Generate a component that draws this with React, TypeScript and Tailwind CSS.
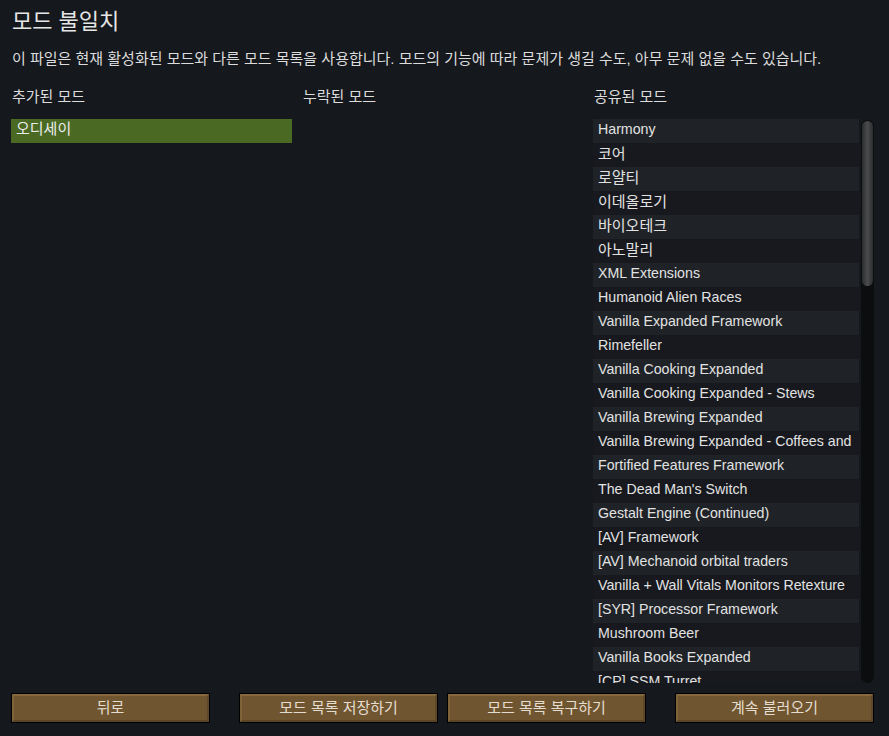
const FONT = { fontFamily: '"Liberation Sans", "Noto Sans CJK KR", sans-serif' }

const added = ["오디세이"]

// the game cuts long names at the row edge
const shared = [
  "Harmony",
  "코어",
  "로얄티",
  "이데올로기",
  "바이오테크",
  "아노말리",
  "XML Extensions",
  "Humanoid Alien Races",
  "Vanilla Expanded Framework",
  "Rimefeller",
  "Vanilla Cooking Expanded",
  "Vanilla Cooking Expanded - Stews",
  "Vanilla Brewing Expanded",
  "Vanilla Brewing Expanded - Coffees and",
  "Fortified Features Framework",
  "The Dead Man's Switch",
  "Gestalt Engine (Continued)",
  "[AV] Framework",
  "[AV] Mechanoid orbital traders",
  "Vanilla + Wall Vitals Monitors Retexture",
  "[SYR] Processor Framework",
  "Mushroom Beer",
  "Vanilla Books Expanded",
  "[CP] SSM Turret",
]

const HANGUL = /[가-힣]/

function Button({ label }: { label: string }) {
  return (
    <button className="h-[30px] w-[199px] border border-black bg-[#705630] p-0">
      <div className="flex h-full w-full items-center justify-center border-2 border-t-[#85693d] border-l-[#7f643a] border-b-[#5a4526] border-r-[#5e4828] text-[15px] text-[#e4ddd0]">
        {label}
      </div>
    </button>
  )
}

export default function App() {
  return (
    <div style={FONT} className="flex h-[736px] w-[889px] flex-col overflow-hidden bg-[#15181d] px-[11px] text-[#dcdcdc]">
      <h1 className="mt-[7px] h-[30px] pl-px text-[22px] leading-[30px] text-[#e6e6e6]">모드 불일치</h1>
      <p className="mt-[12px] h-[20px] pl-px text-[15px] leading-[20px]">
        이 파일은 현재 활성화된 모드와 다른 모드 목록을 사용합니다. 모드의 기능에 따라 문제가 생길 수도, 아무 문제 없을 수도 있습니다.
      </p>

      <div className="mt-[19px] grid h-[596px] grid-cols-[281px_281px_281px] gap-x-[10px]">
        <div className="flex flex-col">
          <div className="h-[31px] pl-px text-[15px] leading-[18px]">추가된 모드</div>
          {added.map((m) => (
            <div key={m} className="h-[24px] bg-[#4a6a24] pl-[5px] text-[15px] leading-[20px] text-[#ececec]">
              {m}
            </div>
          ))}
        </div>
        <div className="flex flex-col">
          <div className="h-[31px] pl-px text-[15px] leading-[18px]">누락된 모드</div>
        </div>
        <div className="flex flex-col">
          <div className="h-[31px] pl-px text-[15px] leading-[18px]">공유된 모드</div>
          <div className="flex h-[564px] gap-[2px]">
            <div className="w-[266px] overflow-hidden">
              {shared.map((m, i) => (
                <div
                  key={m}
                  className={`h-[24px] overflow-hidden whitespace-nowrap pl-[5px] leading-[21px] text-[#e2e2e2] ${
                    HANGUL.test(m) ? "text-[15px]" : "text-[14.2px]"
                  } ${i % 2 === 0 ? "bg-[#1f2227]" : "bg-[#17191e]"}`}
                >
                  {m}
                </div>
              ))}
            </div>
            <div className="mt-px w-[13px] rounded-full bg-[#0b0d0f] p-px">
              <div className="h-[165px] rounded-full bg-gradient-to-r from-[#2c2d2f] via-[#4a4b4d] to-[#2c2d2f]" />
            </div>
          </div>
        </div>
      </div>

      <div className="mt-[9px] flex items-start">
        <Button label="뒤로" />
        <div className="ml-[29px]">
          <Button label="모드 목록 저장하기" />
        </div>
        <div className="ml-[9px]">
          <Button label="모드 목록 복구하기" />
        </div>
        <div className="ml-[29px]">
          <Button label="계속 불러오기" />
        </div>
      </div>
    </div>
  )
}
